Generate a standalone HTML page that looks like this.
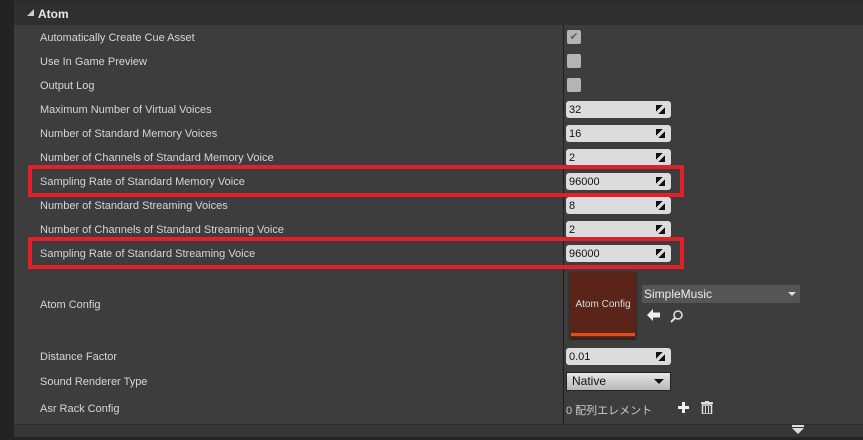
<!DOCTYPE html>
<html><head><meta charset="utf-8"><style>
*{margin:0;padding:0;box-sizing:border-box}
body{width:863px;height:440px;background:#232323;position:relative;overflow:hidden;font-family:"Liberation Sans","Noto Sans CJK JP",sans-serif;font-size:11px;color:#d6d6d6}
.abs{position:absolute}
.lbl{position:absolute;left:40px;line-height:14px;white-space:nowrap}
.fld{position:absolute;left:566px;width:105px;height:17px;background:#dcdcdc;border-radius:3px;color:#111;font-size:11px;line-height:18px;padding-left:3px}
.fld i{position:absolute;right:6px;top:4px;width:9px;height:9px;background:linear-gradient(135deg,#111 0 38%,transparent 38% 62%,#111 62%)}
.cb{position:absolute;left:567px;width:14px;height:14px;background:#b4b4b4;border-radius:2px}
.red{position:absolute;left:28px;width:656px;height:32px;border:4px solid #e3202a}
</style></head><body>
<div class="abs" style="left:14px;top:0;width:849px;height:3px;background:#2a2a2a"></div>
<div class="abs" style="left:14px;top:3px;width:849px;height:22px;background:#2f2f2f"></div>
<div class="abs" style="left:27px;top:9px;width:0;height:0;border-left:7px solid transparent;border-bottom:7px solid #ccc"></div>
<div class="abs" style="left:38px;top:6px;font-size:12px;font-weight:bold;color:#e8e8e8;line-height:16px">Atom</div>
<div class="abs" style="left:14px;top:25px;width:849px;height:399px;background:#3d3d3d"></div>
<div class="abs" style="left:563px;top:25px;width:1px;height:399px;background:#1e1e1e"></div>
<div class="abs" style="left:14px;top:424px;width:849px;height:13px;background:#363636;border-top:1px solid #2c2c2c"></div>
<div class="abs" style="left:792px;top:428px;width:0;height:0;border-left:6px solid transparent;border-right:6px solid transparent;border-top:6px solid #ddd"></div>
<div class="abs" style="left:792px;top:425px;width:12px;height:2px;background:#ddd"></div>

<div class="lbl" style="top:31px">Automatically Create Cue Asset</div>
<div class="lbl" style="top:55px">Use In Game Preview</div>
<div class="lbl" style="top:79px">Output Log</div>
<div class="lbl" style="top:103px">Maximum Number of Virtual Voices</div>
<div class="lbl" style="top:127px">Number of Standard Memory Voices</div>
<div class="lbl" style="top:151px">Number of Channels of Standard Memory Voice</div>
<div class="lbl" style="top:175px">Sampling Rate of Standard Memory Voice</div>
<div class="lbl" style="top:199px">Number of Standard Streaming Voices</div>
<div class="lbl" style="top:223px">Number of Channels of Standard Streaming Voice</div>
<div class="lbl" style="top:247px">Sampling Rate of Standard Streaming Voice</div>
<div class="lbl" style="top:298px">Atom Config</div>
<div class="lbl" style="top:350px">Distance Factor</div>
<div class="lbl" style="top:375px">Sound Renderer Type</div>
<div class="lbl" style="top:402px">Asr Rack Config</div>

<div class="cb" style="top:30px;color:#666;font-size:11px;line-height:14px;text-align:center">✔</div>
<div class="cb" style="top:54px"></div>
<div class="cb" style="top:78px"></div>
<div class="fld" style="top:101px">32<i></i></div>
<div class="fld" style="top:125px">16<i></i></div>
<div class="fld" style="top:149px">2<i></i></div>
<div class="fld" style="top:173px">96000<i></i></div>
<div class="fld" style="top:197px">8<i></i></div>
<div class="fld" style="top:221px">2<i></i></div>
<div class="fld" style="top:245px">96000<i></i></div>

<div class="red" style="top:165px"></div>
<div class="red" style="top:237px"></div>

<div class="abs" style="left:570px;top:272px;width:66px;height:66px;background:#5a2418;box-shadow:0 1px 2px #111"></div>
<div class="abs" style="left:571px;top:333px;width:64px;height:3px;background:#e0501c"></div>
<div class="abs" style="left:570px;top:299px;width:66px;text-align:center;font-size:10px;color:#ddd">Atom Config</div>
<div class="abs" style="left:642px;top:285px;width:158px;height:18px;background:#555;border-radius:2px;color:#eee;font-size:12px;line-height:18px;padding-left:2px">SimpleMusic<span style="position:absolute;right:4px;top:7px;width:0;height:0;border-left:4px solid transparent;border-right:4px solid transparent;border-top:4px solid #ddd"></span></div>
<svg class="abs" style="left:647px;top:309px" width="14" height="12"><path d="M0 6 L6 0 L6 3.5 L13 3.5 L13 8.5 L6 8.5 L6 12 Z" fill="#eee"/></svg>
<svg class="abs" style="left:670px;top:309px" width="14" height="14"><circle cx="8" cy="6" r="4" fill="none" stroke="#ddd" stroke-width="1.6"/><line x1="5" y1="9" x2="1" y2="13" stroke="#ddd" stroke-width="2"/></svg>
<div class="fld" style="top:348px">0.01<i></i></div>
<div class="abs" style="left:566px;top:372px;width:105px;height:19px;background:linear-gradient(#e6e6e6,#b8b8b8);border:1px solid #222;color:#111;font-size:12px;line-height:17px;padding-left:5px">Native<span style="position:absolute;right:6px;top:6px;width:0;height:0;border-left:5px solid transparent;border-right:5px solid transparent;border-top:5px solid #111"></span></div>
<div class="abs" style="left:566px;top:402px;font-size:11px;color:#ccc">0 配列エレメント</div>
<svg class="abs" style="left:678px;top:402px" width="11" height="11"><rect x="4" y="0" width="3" height="11" fill="#eee"/><rect x="0" y="4" width="11" height="3" fill="#eee"/></svg>
<svg class="abs" style="left:701px;top:401px" width="12" height="13"><rect x="0" y="1" width="12" height="2" fill="#ddd"/><rect x="4" y="0" width="4" height="2" fill="#ddd"/><rect x="1.5" y="4" width="9" height="9" fill="none" stroke="#ddd" stroke-width="1.5"/><line x1="4.5" y1="5" x2="4.5" y2="12" stroke="#ddd"/><line x1="7.5" y1="5" x2="7.5" y2="12" stroke="#ddd"/></svg>
</body></html>
